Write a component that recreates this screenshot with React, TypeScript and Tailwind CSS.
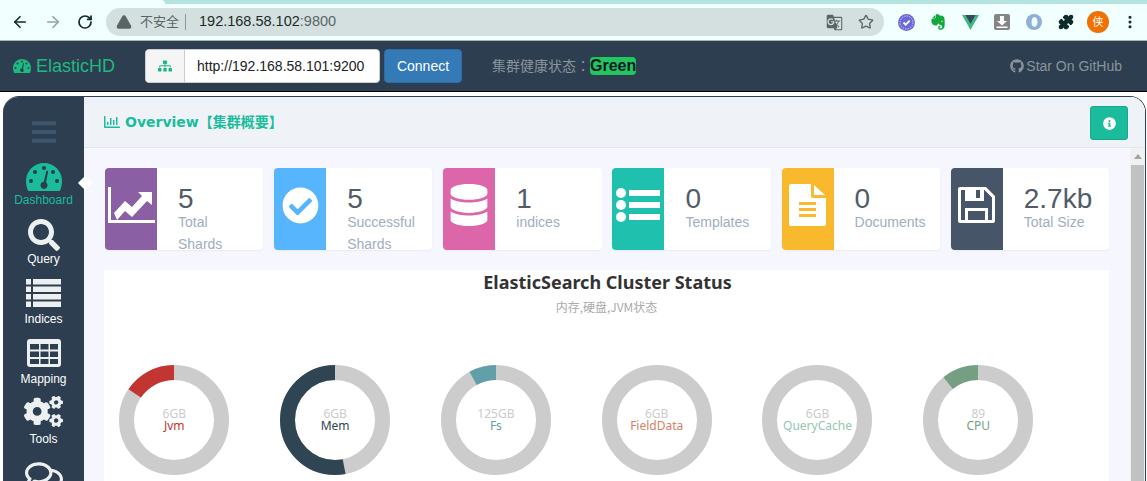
import React from 'react';
import { ArrowLeft, ArrowRight, RotateCw, Star, Puzzle, TriangleAlert, EllipsisVertical } from 'lucide-react';
import {
  FaSitemap,
  FaGithub,
  FaInfoCircle,
  FaCheckCircle,
  FaDatabase,
  FaBars,
  FaSearch,
  FaCogs,
  FaRegComments,
  FaEvernote,
  FaRegChartBar,
} from 'react-icons/fa';
import { MdGTranslate } from 'react-icons/md';

function Gauge({ size, className }: { size: number; className?: string }) {
  return (
    <svg width={size} height={size * 0.78} viewBox="0 0 36 28" className={className}>
      <path fill="currentColor" d="M18 0C8 0 0 8 0 18c0 3.600.8 7 2.200 10h31.600c1.400-3 2.200-6.400 2.200-10C36 8 28 0 18 0z" />
      <g fill="#2c3e50">
        <circle cx="18" cy="5" r="2" />
        <circle cx="9" cy="9" r="2" />
        <circle cx="27" cy="9" r="2" />
        <circle cx="5" cy="18" r="2" />
        <circle cx="31" cy="18" r="2" />
        <path d="M20.500 7.500l1.800.6-2.300 11.200c1 .8 1.500 1.800 1.500 3 0 2-1.500 3.700-3.500 3.700s-3.500-1.700-3.500-3.700 1.400-3.500 3.300-3.600z" />
      </g>
    </svg>
  );
}

function LineChartIcon() {
  return (
    <svg width="50" height="38" viewBox="0 0 50 38" fill="#fff">
      <path d="M2 1h3v33h44v3H2z" />
      <path d="M8 27l11-12 7 6 10-11-4-4h14v13l-5-4-15 16-7-6-8 9z" />
    </svg>
  );
}

function ListIcon() {
  return (
    <svg width="44" height="34" viewBox="0 0 44 34" fill="#fff">
      <circle cx="5" cy="5" r="5" />
      <circle cx="5" cy="17" r="5" />
      <circle cx="5" cy="29" r="5" />
      <rect x="13" y="2" width="31" height="6" />
      <rect x="13" y="14" width="31" height="6" />
      <rect x="13" y="26" width="31" height="6" />
    </svg>
  );
}

function FileIcon() {
  return (
    <svg width="37" height="42" viewBox="0 0 37 42">
      <path fill="#fff" d="M2 0h20v12a2 2 0 0 0 2 2h13v26a2 2 0 0 1-2 2H2a2 2 0 0 1-2-2V2a2 2 0 0 1 2-2z" />
      <path fill="#fff" d="M25 1l11 10H25z" />
      <g fill="#f8b92c">
        <rect x="10" y="18" width="17" height="3" />
        <rect x="10" y="24" width="17" height="3" />
        <rect x="10" y="30" width="17" height="3" />
      </g>
    </svg>
  );
}

function SaveIcon() {
  return (
    <svg width="37" height="36" viewBox="0 0 37 36">
      <path
        fill="#fff"
        fillRule="evenodd"
        d="M2 0H28L37 9V34a2 2 0 0 1-2 2H2a2 2 0 0 1-2-2V2a2 2 0 0 1 2-2zM3 3V33H7V21H30V33H34V10.500L26.500 3H26V14H7V3zM10 24V33H27V24zM18 3H22V11H18z"
      />
    </svg>
  );
}

function IndicesIcon() {
  return (
    <svg width="35" height="28" viewBox="0 0 35 28" fill="#ecf0f1">
      <rect x="0" y="0" width="5" height="5.500" />
      <rect x="7" y="0" width="28" height="5.500" />
      <rect x="0" y="7.500" width="5" height="5.500" />
      <rect x="7" y="7.500" width="28" height="5.500" />
      <rect x="0" y="15" width="5" height="5.500" />
      <rect x="7" y="15" width="28" height="5.500" />
      <rect x="0" y="22.500" width="5" height="5.500" />
      <rect x="7" y="22.500" width="28" height="5.500" />
    </svg>
  );
}

function MappingIcon() {
  return (
    <svg width="34" height="28" viewBox="0 0 34 28">
      <path
        fill="#ecf0f1"
        fillRule="evenodd"
        d="M3 0h28a3 3 0 0 1 3 3v22a3 3 0 0 1-3 3H3a3 3 0 0 1-3-3V3a3 3 0 0 1 3-3zM3 5v5.500h9V5zM13.500 5v5.500h8V5zM23 5v5.500h8V5zM3 12.500v5.500h9v-5.500zM13.500 12.500v5.500h8v-5.500zM23 12.500v5.500h8v-5.500zM3 20v5h9v-5zM13.500 20v5h8v-5zM23 20v5h8v-5z"
      />
    </svg>
  );
}

const stats = [
  { value: '5', label: 'Total Shards', bg: 'bg-[#8a5fa3]', icon: <LineChartIcon /> },
  { value: '5', label: 'Successful Shards', bg: 'bg-[#57b5fe]', icon: <FaCheckCircle size={37} color="#fff" /> },
  { value: '1', label: 'indices', bg: 'bg-[#dc66a9]', icon: <FaDatabase size={42} color="#fff" /> },
  { value: '0', label: 'Templates', bg: 'bg-[#1fc1ae]', icon: <ListIcon /> },
  { value: '0', label: 'Documents', bg: 'bg-[#f8b92c]', icon: <FileIcon /> },
  { value: '2.7kb', label: 'Total Size', bg: 'bg-[#465568]', icon: <SaveIcon /> },
];

const charts = [
  { top: '6GB', name: 'Jvm', pct: 15.5, color: '#c23531', text: 'text-[#c23531]' },
  { top: '6GB', name: 'Mem', pct: 53, color: '#2f4554', text: 'text-[#2f4554]' },
  { top: '125GB', name: 'Fs', pct: 8, color: '#61a0a8', text: 'text-[#61a0a8]' },
  { top: '6GB', name: 'FieldData', pct: 0, color: '#d48265', text: 'text-[#d48265]' },
  { top: '6GB', name: 'QueryCache', pct: 0, color: '#91c7ae', text: 'text-[#91c7ae]' },
  { top: '89', name: 'CPU', pct: 10.8, color: '#749f83', text: 'text-[#749f83]' },
];

const navItems = [
  { label: 'Query', icon: <FaSearch size={32} />, gap: 'mb-0' },
  { label: 'Indices', icon: <IndicesIcon />, gap: 'mb-[4px]' },
  { label: 'Mapping', icon: <MappingIcon />, gap: 'mb-[4px]' },
  { label: 'Tools', icon: <FaCogs size={39} />, gap: 'mb-0' },
];

function Donut({ top, name, pct, color, text }: (typeof charts)[number]) {
  // stroke runs anticlockwise from 12 o'clock, same as the echarts pie
  const r = 47.5;
  const len = 2 * Math.PI * r;
  return (
    <div className="relative w-[110px] h-[110px] shrink-0">
      <svg width="110" height="110" viewBox="0 0 110 110">
        <circle cx="55" cy="55" r={r} fill="none" stroke="#cccccc" strokeWidth="15" />
        <circle
          cx="55"
          cy="55"
          r={r}
          fill="none"
          stroke={color}
          strokeWidth="15"
          strokeDasharray={`${(len * pct) / 100} ${len}`}
          transform="rotate(-90 55 55) scale(1 -1) translate(0 -110)"
        />
      </svg>
      <div className="absolute inset-0 flex flex-col items-center justify-center text-[12px] leading-[12px] font-['Noto_Sans',sans-serif]">
        <span className="text-[#cccccc]">{top}</span>
        <span className={text}>{name}</span>
      </div>
    </div>
  );
}

export default function App() {
  return (
    <div className="w-[1147px] h-[481px] overflow-hidden bg-white flex flex-col font-['Liberation_Sans','Noto_Sans_CJK_SC',sans-serif]">
      {/* browser chrome */}
      <div className="h-[4px] bg-[#b5e3df] shrink-0">
        <div className="w-[165px] h-[4px] bg-[#f1fffe] rounded-tr-lg" />
      </div>
      <div className="h-[37px] shrink-0 bg-[#f1fffe] border-b border-[#a9b5b4] flex items-center">
        <div className="w-[106px] shrink-0 flex items-center text-[#0c2b2a]">
          <div className="w-[40px] flex justify-center">
            <ArrowLeft size={18} strokeWidth={2.2} />
          </div>
          <div className="w-[25px] flex justify-center text-[#8fa5a3]">
            <ArrowRight size={18} strokeWidth={2.2} />
          </div>
          <div className="w-[40px] flex justify-center">
            <RotateCw size={16} strokeWidth={2.6} />
          </div>
        </div>
        <div className="w-[778px] h-[28px] shrink-0 rounded-full bg-[#d3e0df] flex items-center pl-[10px] pr-[10px]">
          <TriangleAlert size={16} fill="#5a6665" color="#5a6665" className="shrink-0" />
          <span className="ml-[8px] text-[13px] text-[#5a6665]">不安全</span>
          <span className="mx-[6px] w-px h-[16px] bg-[#8c9998]" />
          <span className="ml-[7px] text-[14.500px] text-[#1c2b2a]">192.168.58.102<span className="text-[#5a6665]">:9800</span></span>
          <div className="ml-auto flex items-center gap-[15px] text-[#5a6665]">
            <MdGTranslate size={17} />
            <Star size={16} strokeWidth={2} />
          </div>
        </div>
        <div className="flex items-center ml-[6px]">
          <div className="w-[32px] flex justify-center">
            <svg width="17" height="17" viewBox="0 0 17 17">
              <circle cx="8.500" cy="8.500" r="8.500" fill="#6c68d8" />
              <circle cx="8.500" cy="8.500" r="6.500" fill="none" stroke="#c9c8f2" strokeWidth="1" strokeDasharray="1.500 1" />
              <path d="M5.500 8.500l2.200 2.200 4-4" fill="none" stroke="#fff" strokeWidth="1.800" />
            </svg>
          </div>
          <div className="w-[32px] flex justify-center"><FaEvernote size={18} color="#14a83c" /></div>
          <div className="w-[32px] flex justify-center">
            <svg width="17" height="15" viewBox="0 0 17 15">
              <path d="M0 0h17L8.500 15z" fill="#41b883" />
              <path d="M3.500 0h10L8.500 8.800z" fill="#35495e" />
            </svg>
          </div>
          <div className="w-[32px] flex justify-center">
            <svg width="16" height="16" viewBox="0 0 16 16">
              <rect width="16" height="16" rx="2" fill="#858585" />
              <path d="M6 2h4v5h3l-5 4.500L3 7h3zM2.500 12.500h11V14h-11z" fill="#fff" />
            </svg>
          </div>
          <div className="w-[32px] flex justify-center">
            <svg width="16" height="16" viewBox="0 0 16 16">
              <circle cx="8" cy="8" r="8" fill="#8fb0d6" />
              <ellipse cx="8.500" cy="8" rx="3" ry="5" fill="#f1fffe" />
            </svg>
          </div>
          <div className="w-[32px] flex justify-center"><Puzzle size={16} fill="#0c2b2a" color="#0c2b2a" /></div>
          <div className="w-[32px] flex justify-center">
            <span className="w-[22px] h-[22px] rounded-full bg-[#f07000] flex items-center justify-center text-white text-[11px]">侠</span>
          </div>
          <div className="w-[32px] flex justify-center"><EllipsisVertical size={16} strokeWidth={2.6} color="#0c2b2a" /></div>
        </div>
      </div>

      {/* app navbar */}
      <div className="h-[51px] shrink-0 bg-[#2c3e50] border-b border-black flex items-center pl-[13px] pr-[25px]">
        <div className="flex items-center gap-[5px] text-[#1eb980] w-[132px]">
          <Gauge size={18} />
          <span className="text-[18px] leading-none">ElasticHD</span>
        </div>
        <div className="flex w-[235px] h-[34px] rounded-[4px] overflow-hidden bg-white border border-[#cccccc]">
          <div className="w-[39px] bg-[#f5f5f5] border-r border-[#cccccc] flex items-center justify-center">
            <FaSitemap size={14} color="#1eb980" />
          </div>
          <div className="pl-[12px] text-[14px] text-[#222222] flex items-center">http://192.168.58.101:9200</div>
        </div>
        <div className="ml-[4px] w-[78px] h-[34px] rounded-[4px] bg-[#337ab7] border border-[#2e6da4] text-white text-[14px] flex items-center justify-center">Connect</div>
        <span className="ml-[30px] text-[14px] text-[#8a949c] font-['Liberation_Sans','Noto_Sans_CJK_TC',sans-serif]">集群健康状态：</span>
        <span className="w-[46px] h-[18px] rounded-[4px] bg-[#22c55e] text-[#0a1a2a] text-[16px] leading-[18px] font-bold text-center">Green</span>
        <div className="ml-auto flex items-center gap-[2px] text-[14px] text-[#8a949c]">
          <FaGithub size={14} />
          <span>Star On GitHub</span>
        </div>
      </div>

      {/* page frame */}
      <div className="flex-1 min-h-0 pt-[4px] pl-[3px] pr-[1px]">
        <div className="relative h-[400px] flex rounded-t-[16px] border-t border-r border-[#2c3e50] overflow-hidden">
          <aside className="w-[81px] shrink-0 bg-[#2c3e50] flex flex-col items-center">
            <div className="h-[63px] pt-[6px] shrink-0 flex items-center justify-center text-[#3d566e]">
              <FaBars size={28} />
            </div>
            <div className="h-[48px] shrink-0 flex flex-col items-center justify-end text-[#1abc9c]">
              <Gauge size={36} className="text-[#1abc9c]" />
              <span className="mt-[1px] text-[12px] leading-[16px]">Dashboard</span>
            </div>
            <div className="-mt-[1px] flex flex-col items-center">
              {navItems.map((item) => (
                <div key={item.label} className="h-[60px] shrink-0 flex flex-col items-center justify-end text-[#ecf0f1]">
                  <div className={item.gap}>{item.icon}</div>
                  <span className="text-[12px] leading-[16px] text-white">{item.label}</span>
                </div>
              ))}
            </div>
            <div className="mt-[11px] shrink-0 text-[#ecf0f1]">
              <FaRegComments size={38} />
            </div>
          </aside>
          <div className="flex-1 min-w-0 flex flex-col bg-[#f6f7fe]">
            <div className="h-[51px] shrink-0 bg-[#eff3f7] border-b border-[#e0e6ed] flex items-center pl-[20px] pr-[17px]">
              <FaRegChartBar size={16} color="#1abc9c" />
              <span className="ml-[5px] text-[14px] font-bold text-[#1abc9c] font-['DejaVu_Sans','Noto_Sans_CJK_SC',sans-serif]">Overview【集群概要】</span>
              <div className="ml-auto mt-[2px] w-[38px] h-[34px] rounded-[3px] bg-[#1abc9c] border border-[#16a88b] flex items-center justify-center">
                <FaInfoCircle size={13} color="#fff" />
              </div>
            </div>
            <div className="flex-1 min-h-0 flex">
              <div className="w-[1046px] shrink-0 pt-[20px] pl-[21px] pr-[21px]">
                <div className="grid grid-cols-6 gap-[10.900px]">
                  {stats.map((s) => (
                    <div key={s.label} className="h-[82px] bg-white rounded-[4px] shadow-[0_1px_2px_rgba(0,0,0,0.05)] overflow-hidden flex">
                      <div className={`w-[52px] pb-[8px] shrink-0 flex items-center justify-center ${s.bg}`}>{s.icon}</div>
                      <div className="pl-[21px] pt-[18px]">
                        <div className="text-[28px] leading-[25px] text-[#525c68]">{s.value}</div>
                        <div className="w-[75px] text-[14px] leading-[22px] text-[#a0aec0]">{s.label}</div>
                      </div>
                    </div>
                  ))}
                </div>
                <div className="mt-[20px] -ml-[1px] bg-white h-[300px]">
                  <div className="pl-[2px] text-center text-[18px] leading-[24px] font-bold text-[#333333] font-['Noto_Sans',sans-serif]">ElasticSearch Cluster Status</div>
                  <div className="mt-[4px] text-center text-[12px] leading-[18px] text-[#aaaaaa] font-['Noto_Sans_CJK_SC',sans-serif]">内存,硬盘,JVM状态</div>
                  <div className="mt-[49px] pl-[15.300px] flex gap-[50.800px]">
                    {charts.map((c) => (
                      <Donut key={c.name} {...c} />
                    ))}
                  </div>
                </div>
              </div>
              <div className="flex-1 bg-[#f1f1f1] flex flex-col items-center">
                <div className="h-[17px] flex items-center justify-center">
                  <span className="w-0 h-0 border-x-[4px] border-x-transparent border-b-[5px] border-b-[#a3a3a3]" />
                </div>
                <div className="flex-1 w-[13px] bg-[#c1c1c1]" />
              </div>
            </div>
          </div>
          <span className="absolute left-[77px] top-[81px] w-[10px] h-[10px] rotate-45 bg-white" />
        </div>
      </div>
    </div>
  );
}
